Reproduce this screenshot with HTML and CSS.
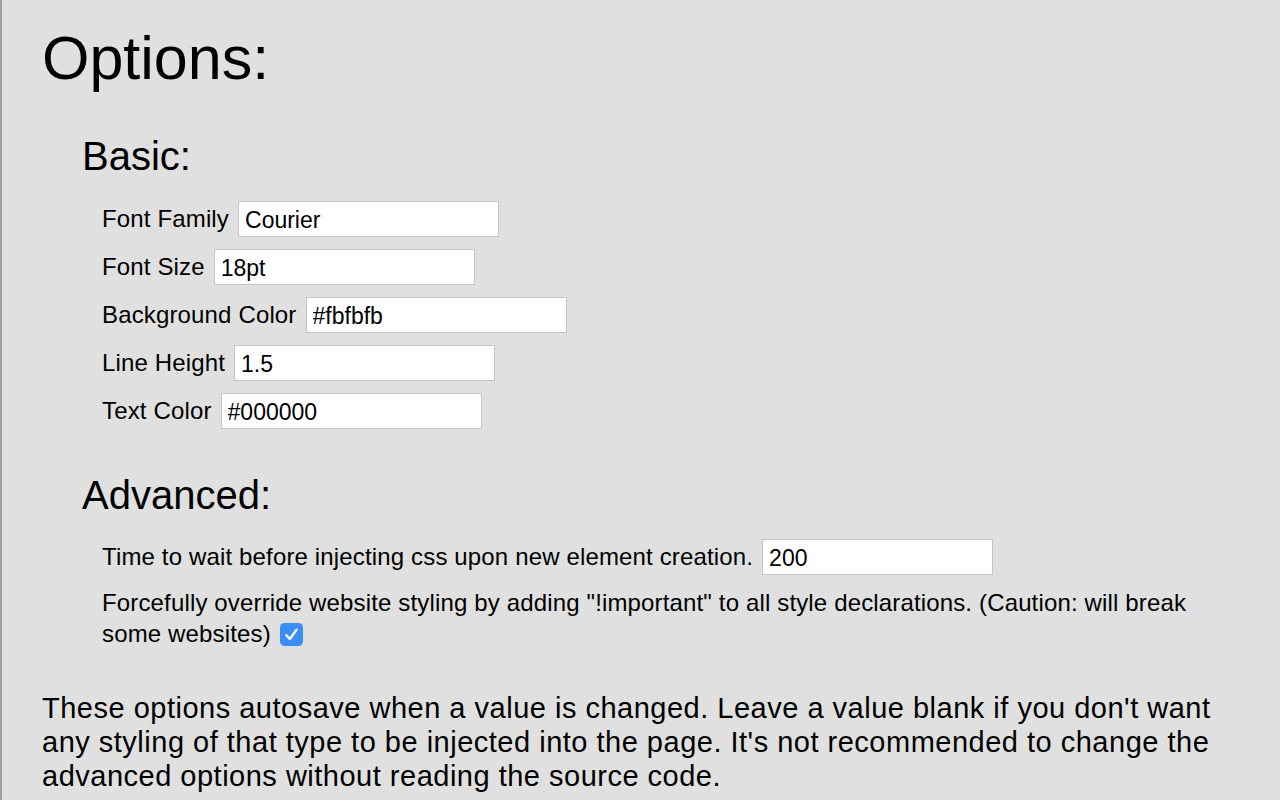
FILE: index.html
```html
<!DOCTYPE html>
<html lang="en">
<head>
<meta charset="utf-8">
<title>Options</title>
<link rel="stylesheet" href="styles.css">
</head>
<body>
<div class="page">
  <h1 class="title">Options:</h1>

  <section class="group">
    <h2 class="group-title">Basic:</h2>
    <div class="rows">
      <label class="row"><span class="label">Font Family</span><input class="field" type="text" value="Courier"></label>
      <label class="row"><span class="label">Font Size</span><input class="field" type="text" value="18pt"></label>
      <label class="row"><span class="label">Background Color</span><input class="field" type="text" value="#fbfbfb"></label>
      <label class="row"><span class="label">Line Height</span><input class="field" type="text" value="1.5"></label>
      <label class="row"><span class="label">Text Color</span><input class="field" type="text" value="#000000"></label>
    </div>
  </section>

  <section class="group advanced">
    <h2 class="group-title">Advanced:</h2>
    <div class="rows">
      <label class="row"><span class="label">Time to wait before injecting css upon new element creation.</span><input class="field field-short" type="text" value="200"></label>
      <p class="para">Forcefully override website styling by adding "!important" to all style declarations. (Caution: will break some websites) <span class="check"><svg viewBox="0 0 23 23" width="23" height="23"><rect x="0" y="0" width="23" height="23" rx="4.5" fill="#3b8ef6"/><path d="M6.3 12.2 L9.9 16 L16.6 6.6" fill="none" stroke="#ffffff" stroke-width="2.3" stroke-linecap="round" stroke-linejoin="round"/></svg></span></p>
    </div>
  </section>

  <p class="note">These options autosave when a value is changed. Leave a value blank if you don't want any styling of that type to be injected into the page. It's not recommended to change the advanced options without reading the source code.</p>
</div>
</body>
</html>
```

FILE: styles.css
```css
html, body {
  margin: 0;
  padding: 0;
}

body {
  background: #dfe0df;
  color: #000;
  font-family: "Liberation Sans", Arial, sans-serif;
  min-height: 800px;
  border-left: 2px solid #9e9e9e;
  box-sizing: border-box;
}

.page {
  padding: 0 45px 0 40px;
}

.title {
  margin: 22px 0 0 0;
  font-size: 61px;
  line-height: 72px;
  font-weight: normal;
}

.group {
  padding-left: 40px;
  margin-top: 38px;
}

.group.advanced {
  margin-top: 42px;
}

.group-title {
  margin: 0;
  font-size: 40px;
  line-height: 48px;
  font-weight: normal;
}

.rows {
  padding-left: 20px;
  margin-top: 20px;
  display: flex;
  flex-direction: column;
  gap: 12px;
}

.group:first-of-type .rows {
  margin-top: 21px;
}

.row {
  display: flex;
  align-items: center;
  gap: 9px;
  font-size: 24px;
  letter-spacing: 0.15px;
}

.label {
  white-space: nowrap;
}

.field {
  box-sizing: border-box;
  width: 261px;
  height: 36px;
  margin: 0;
  padding: 3px 6px 0 6px;
  border: 1px solid #c5c5c5;
  background: #ffffff;
  font-family: "Liberation Sans", Arial, sans-serif;
  font-size: 23px;
  letter-spacing: 0;
  color: #000;
  outline: none;
}

.field-short {
  width: 231px;
}

.para {
  margin: 0;
  font-size: 24px;
  line-height: 31px;
  letter-spacing: 0.15px;
}

.check {
  display: inline-block;
  vertical-align: -4px;
  width: 23px;
  height: 23px;
  margin-left: 2px;
}

.check svg {
  display: block;
}

.note {
  margin: 42px 0 0 0;
  font-size: 29px;
  line-height: 34px;
  letter-spacing: 0.5px;
}
```
